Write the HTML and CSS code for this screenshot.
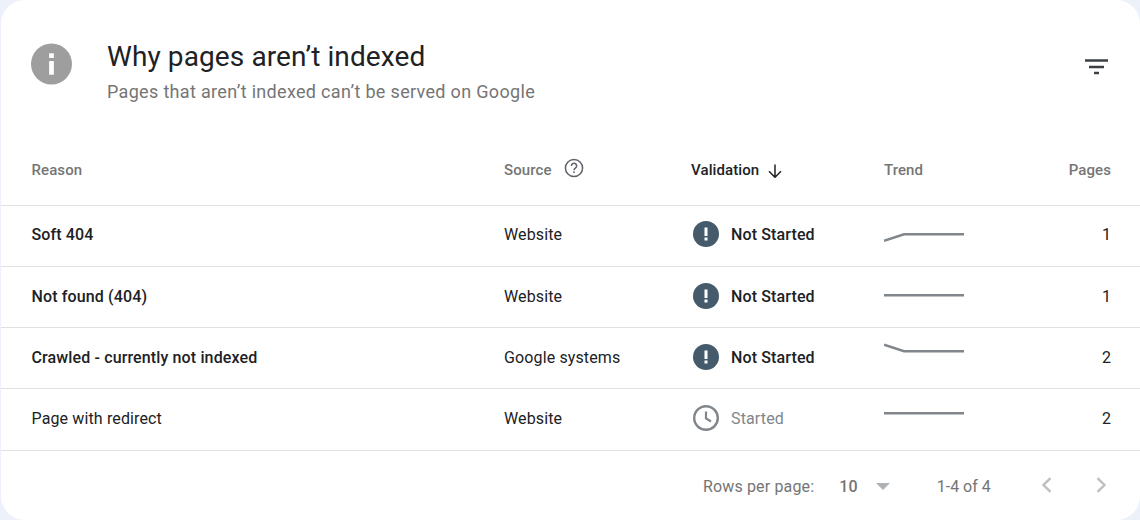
FILE: index.html
```html
<!DOCTYPE html>
<html lang="en">
<head>
<meta charset="utf-8">
<title>Why pages aren’t indexed</title>
<link rel="stylesheet" href="styles.css">
</head>
<body>
<main class="card">
  <header class="head">
    <svg class="info" viewBox="0 0 42 42"><circle cx="21" cy="21" r="21" fill="#9e9e9e"/><rect x="18.600" y="10" width="4.800" height="4.800" fill="#fff"/><rect x="18.600" y="18" width="4.800" height="14" fill="#fff"/></svg>
    <div class="titles">
      <h1 class="title">Why pages aren’t indexed</h1>
      <p class="sub">Pages that aren’t indexed can’t be served on Google</p>
    </div>
    <svg class="filter" viewBox="0 0 24 24"><path d="M0 5.500h23M4 12h15M9 18h5" stroke="#3c4043" stroke-width="2.500" fill="none"/></svg>
  </header>
  <div class="row hdr">
    <div>Reason</div>
    <div class="src">Source
      <svg class="help" viewBox="0 0 20 20"><circle cx="10" cy="10" r="8.600" fill="none" stroke="#5f6368" stroke-width="1.500"/><path d="M7.400 7.900a2.600 2.600 0 1 1 4.200 2c-.9.700-1.600 1.100-1.600 2.300" fill="none" stroke="#5f6368" stroke-width="1.500"/><rect x="9.200" y="13.400" width="1.600" height="1.600" fill="#5f6368"/></svg>
    </div>
    <div class="sorted">Validation
      <svg class="arrow" viewBox="0 0 14 14"><path d="M7 .5v12.500M1 7.300l6 6 6-6" fill="none" stroke="#202124" stroke-width="1.500"/></svg>
    </div>
    <div>Trend</div>
    <div class="num">Pages</div>
  </div>
  <div class="row body strong first">
    <div>Soft 404</div>
    <div class="plain">Website</div>
    <div class="status">
      <svg class="ic" viewBox="0 0 26 26"><circle cx="13" cy="13" r="13" fill="#455a6a"/><rect x="11.500" y="6.500" width="3" height="8.500" fill="#fff"/><rect x="11.500" y="16.500" width="3" height="3" fill="#fff"/></svg>
      <span>Not Started</span>
    </div>
    <svg class="spark" viewBox="0 0 80 30"><polyline points="0,21.700 20,15.300 80,15.300" fill="none" stroke="#80868b" stroke-width="2.500"/></svg>
    <div class="num plain">1</div>
  </div>
  <div class="row body strong">
    <div>Not found (404)</div>
    <div class="plain">Website</div>
    <div class="status">
      <svg class="ic" viewBox="0 0 26 26"><circle cx="13" cy="13" r="13" fill="#455a6a"/><rect x="11.500" y="6.500" width="3" height="8.500" fill="#fff"/><rect x="11.500" y="16.500" width="3" height="3" fill="#fff"/></svg>
      <span>Not Started</span>
    </div>
    <svg class="spark" viewBox="0 0 80 30"><polyline points="0,14.300 80,14.300" fill="none" stroke="#80868b" stroke-width="2.500"/></svg>
    <div class="num plain">1</div>
  </div>
  <div class="row body strong">
    <div>Crawled - currently not indexed</div>
    <div class="plain">Google systems</div>
    <div class="status">
      <svg class="ic" viewBox="0 0 26 26"><circle cx="13" cy="13" r="13" fill="#455a6a"/><rect x="11.500" y="6.500" width="3" height="8.500" fill="#fff"/><rect x="11.500" y="16.500" width="3" height="3" fill="#fff"/></svg>
      <span>Not Started</span>
    </div>
    <svg class="spark" viewBox="0 0 80 30"><polyline points="0,2.700 20,9.300 80,9.300" fill="none" stroke="#80868b" stroke-width="2.500"/></svg>
    <div class="num plain">2</div>
  </div>
  <div class="row body last">
    <div>Page with redirect</div>
    <div>Website</div>
    <div class="status muted">
      <svg class="ic" viewBox="0 0 26 26"><circle cx="13" cy="13" r="11.800" fill="none" stroke="#80868b" stroke-width="2.400"/><path d="M13 6.500v7l5 3" fill="none" stroke="#80868b" stroke-width="2.200"/></svg>
      <span>Started</span>
    </div>
    <svg class="spark" viewBox="0 0 80 30"><polyline points="0,10.300 80,10.300" fill="none" stroke="#80868b" stroke-width="2.500"/></svg>
    <div class="num">2</div>
  </div>
  <footer class="foot">
    <span class="rpp">Rows per page:</span>
    <span class="count">10</span>
    <svg class="drop" viewBox="0 0 14 7"><path d="M0 0h14L7 7z" fill="#b0b3b6"/></svg>
    <span class="range">1-4 of 4</span>
    <svg class="pg prev" viewBox="0 0 11 16"><path d="M9.500 1.200 2.500 8l7 6.800" fill="none" stroke="#bdbfc1" stroke-width="2.400"/></svg>
    <svg class="pg next" viewBox="0 0 11 16"><path d="M1.500 1.200 8.500 8l-7 6.800" fill="none" stroke="#bdbfc1" stroke-width="2.400"/></svg>
  </footer>
</main>
</body>
</html>
```
FILE: styles.css
```css
html, body { margin: 0; height: 100%; }
body { background: #edf2fa; font-family: Roboto, "Liberation Sans", sans-serif; overflow: hidden; }
.card { box-sizing: border-box; width: 1139px; height: 520px; margin-left: 1px; background: #fff; border-radius: 24px; color: #202124; }
.head { display: flex; align-items: flex-start; height: 147px; box-sizing: border-box; padding: 43px 31px 0 30px; }
.info { width: 41px; height: 42px; flex: none; }
.titles { margin-left: 35px; flex: 1; margin-top: -3px; }
.title { margin: 0; font-size: 28px; font-weight: 400; line-height: 34px; letter-spacing: .1px; color: #202124; }
.sub { margin: 6px 0 0; font-size: 18px; line-height: 24px; letter-spacing: .32px; color: #757575; }
.filter { width: 24px; height: 24px; flex: none; margin-top: 12px; margin-left: -2px; }
.row { display: grid; grid-template-columns: 472.500px 187px 193px 1fr 60px; align-items: center; padding: 0 29px 0 30.500px; }
.hdr { height: 59px; padding-bottom: 12px; box-sizing: border-box; font-size: 15px; font-weight: 500; color: #757575; letter-spacing: .1px; border-bottom: 1px solid #e0e0e0; }
.src, .sorted { display: flex; align-items: center; }
.sorted { color: #202124; }
.help { width: 20px; height: 20px; margin-left: 12px; margin-top: -4px; }
.arrow { width: 14px; height: 14px; margin-left: 9px; margin-top: 1px; }
.num { text-align: right; }
.body { height: 61px; box-sizing: border-box; padding-bottom: 2px; border-bottom: 1px solid #e0e0e0; font-size: 16px; letter-spacing: .13px; color: #202124; }
.first { padding-bottom: 4px; }
.last { height: 62px; padding-bottom: 3px; }
.strong { font-weight: 500; }
.plain { font-weight: 400; }
.status { display: flex; align-items: center; font-weight: 500; }
.ic { width: 26px; height: 26px; margin-left: 2px; margin-right: 12px; }
.muted { color: #80868b; font-weight: 400; }
.spark { width: 80px; height: 30px; }
.foot { display: flex; align-items: center; height: 70px; font-size: 16px; letter-spacing: .15px; color: #757575; }
.rpp { margin-left: 702px; }
.count { margin-left: 25px; font-weight: 500; }
.drop { width: 14px; height: 7px; margin-left: 18px; }
.range { margin-left: 47px; letter-spacing: 0; }
.pg { width: 11px; height: 16px; margin-top: -2px; }
.prev { margin-left: 50px; }
.next { margin-left: 44px; }
```
